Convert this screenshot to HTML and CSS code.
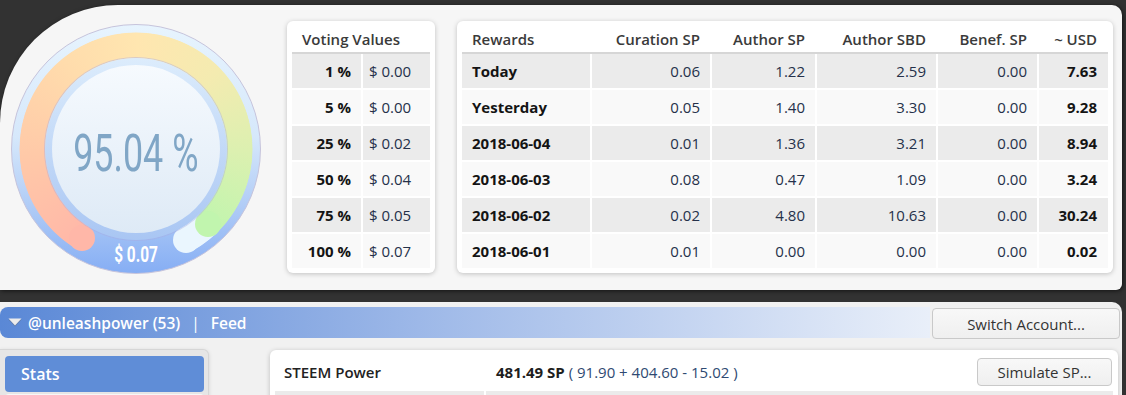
FILE: index.html
```html
<!DOCTYPE html>
<html lang="en">
<head>
<meta charset="UTF-8" />
<meta name="viewport" content="width=device-width, initial-scale=1" />
<title>Steem Account</title>
<link rel="stylesheet" href="styles.css">
</head>
<body>
  <section class="summary">
    <div class="gauge" role="img" aria-label="Voting power 95.04 %">
      <div class="gauge-arc"></div>
      <span class="cap cap-track"></span>
      <span class="cap cap-start"></span>
      <span class="cap cap-end"></span>
      <div class="gauge-face">
        <div class="gauge-disc"><span class="gauge-pct">95.04 %</span></div>
      </div>
      <span class="gauge-usd">$ 0.07</span>
    </div>

    <div class="card vote-card">
      <table class="grid vote-table">
        <colgroup><col class="c-pct"><col class="c-val"></colgroup>
        <thead>
          <tr><th colspan="2">Voting Values</th></tr>
        </thead>
        <tbody>
          <tr><td class="strong num">1 %</td><td class="val">$ 0.00</td></tr>
          <tr><td class="strong num">5 %</td><td class="val">$ 0.00</td></tr>
          <tr><td class="strong num">25 %</td><td class="val">$ 0.02</td></tr>
          <tr><td class="strong num">50 %</td><td class="val">$ 0.04</td></tr>
          <tr><td class="strong num">75 %</td><td class="val">$ 0.05</td></tr>
          <tr><td class="strong num">100 %</td><td class="val">$ 0.07</td></tr>
        </tbody>
      </table>
    </div>

    <div class="card rewards-card">
      <table class="grid rewards-table">
        <colgroup>
          <col class="c-day"><col class="c-cur"><col class="c-asp"><col class="c-sbd"><col class="c-ben"><col class="c-usd">
        </colgroup>
        <thead>
          <tr>
            <th>Rewards</th>
            <th class="num">Curation SP</th>
            <th class="num">Author SP</th>
            <th class="num">Author SBD</th>
            <th class="num">Benef. SP</th>
            <th class="num">~ USD</th>
          </tr>
        </thead>
        <tbody>
          <tr><td class="strong">Today</td><td class="num">0.06</td><td class="num">1.22</td><td class="num">2.59</td><td class="num">0.00</td><td class="num strong">7.63</td></tr>
          <tr><td class="strong">Yesterday</td><td class="num">0.05</td><td class="num">1.40</td><td class="num">3.30</td><td class="num">0.00</td><td class="num strong">9.28</td></tr>
          <tr><td class="strong">2018-06-04</td><td class="num">0.01</td><td class="num">1.36</td><td class="num">3.21</td><td class="num">0.00</td><td class="num strong">8.94</td></tr>
          <tr><td class="strong">2018-06-03</td><td class="num">0.08</td><td class="num">0.47</td><td class="num">1.09</td><td class="num">0.00</td><td class="num strong">3.24</td></tr>
          <tr><td class="strong">2018-06-02</td><td class="num">0.02</td><td class="num">4.80</td><td class="num">10.63</td><td class="num">0.00</td><td class="num strong">30.24</td></tr>
          <tr><td class="strong">2018-06-01</td><td class="num">0.01</td><td class="num">0.00</td><td class="num">0.00</td><td class="num">0.00</td><td class="num strong">0.02</td></tr>
        </tbody>
      </table>
    </div>
  </section>

  <section class="account">
    <div class="account-bar">
      <div class="account-title">
        <svg class="caret" width="14" height="9" viewBox="0 0 14 9" aria-hidden="true">
          <polygon points="0.5,1.5 13.5,1.5 7,8.5" fill="#5d6b80" opacity="0.55"/>
          <polygon points="0.5,0.5 13.5,0.5 7,7.5" fill="#ececec"/>
        </svg>
        <span>@unleashpower (53)</span>
        <span class="sep">|</span>
        <span>Feed</span>
      </div>
      <button type="button" class="btn switch-btn">Switch Account...</button>
    </div>

    <div class="account-body">
      <nav class="side-nav">
        <a class="nav-item active" href="#">Stats</a>
        <a class="nav-item" href="#" aria-label="More"></a>
      </nav>

      <div class="card stats-card">
        <table class="grid stats-table">
          <colgroup><col class="c-label"><col></colgroup>
          <tbody>
            <tr>
              <td class="label">STEEM Power</td>
              <td>
                <div class="sp-cell">
                  <span><b>481.49 SP</b> <span class="sp-parts">( 91.90 + 404.60 - 15.02 )</span></span>
                  <button type="button" class="btn sim-btn">Simulate SP...</button>
                </div>
              </td>
            </tr>
            <tr class="alt">
              <td class="label">&nbsp;</td>
              <td><span class="mini-btn"></span></td>
            </tr>
          </tbody>
        </table>
      </div>
    </div>
  </section>
</body>
</html>
```

FILE: styles.css
```css
html, body {
  height: 395px;
  overflow: hidden;
}

body {
  margin: 0;
  background: #323232;
  font-family: "Open Sans", "Liberation Sans", sans-serif;
  font-size: 15px;
  color: #333;
}

/* top summary panel */
.summary {
  display: flex;
  align-items: flex-start;
  box-sizing: border-box;
  width: 1122px;
  height: 285px;
  margin-top: 5px;
  padding: 16px 0 0 11px;
  background: #f6f6f6;
  border-radius: 118px 10px 6px 0;
  box-shadow: 1px 1px 4px rgba(0,0,0,0.6);
}

/* voting power gauge */
.gauge {
  position: relative;
  flex: none;
  box-sizing: border-box;
  width: 250px;
  height: 250px;
  margin-top: 3px;
  border: 1px solid #c6c4dc;
  border-radius: 50%;
  background: linear-gradient(#e7f4fe 0%, #d6e8fb 45%, #b2cdf6 72%, #86aef4 100%);
}

.gauge-arc {
  position: absolute;
  left: 7px;
  top: 7px;
  width: 234px;
  height: 234px;
  border-radius: 50%;
  background: conic-gradient(from 211deg,
    #ffb7a8 0deg, #ffc9a8 55deg, #ffdcac 110deg, #ffe6b0 150deg,
    #f4ebb0 195deg, #dcf0b0 240deg, #c1f5ae 285deg,
    #eaf6fe 285deg, #eaf6fe 300deg, transparent 300deg);
  -webkit-mask: radial-gradient(circle, transparent 90px, #000 91px, #000 116px, transparent 117px);
  mask: radial-gradient(circle, transparent 90px, #000 91px, #000 116px, transparent 117px);
}

.cap {
  position: absolute;
  width: 26px;
  height: 26px;
  border-radius: 50%;
}

.cap-start {
  left: 57px;
  top: 200px;
  background: #ffb7a8;
}

.cap-track {
  left: 161px;
  top: 202px;
  background: #eaf6fe;
}

.cap-end {
  left: 183px;
  top: 186px;
  background: #c1f5ae;
}

.gauge-face {
  position: absolute;
  left: 33px;
  top: 33px;
  box-sizing: border-box;
  width: 182px;
  height: 182px;
  padding: 7px;
  border-radius: 50%;
  background: linear-gradient(#dcecfc, #a9c6f3);
  box-shadow: 0 0 0 1px rgba(170,170,225,0.45);
}

.gauge-disc {
  display: flex;
  justify-content: center;
  align-items: center;
  width: 100%;
  height: 100%;
  border-radius: 50%;
  background: linear-gradient(#f6fafe, #deeaf6);
}

.gauge-pct {
  display: inline-block;
  padding-top: 9px;
  font-family: Roboto, "Liberation Sans", sans-serif;
  font-size: 52px;
  line-height: 1;
  color: #80a6c6;
  white-space: nowrap;
  transform: scaleX(0.69);
}

.gauge-usd {
  position: absolute;
  left: 50%;
  top: 219px;
  font-family: Roboto, "Liberation Sans", sans-serif;
  font-size: 22px;
  font-weight: 700;
  line-height: 22px;
  color: #fff;
  white-space: nowrap;
  transform: translateX(-50%) scaleX(0.7);
}

/* cards and tables */
.card {
  background: #fff;
  border-radius: 6px;
  box-shadow: 0 1px 5px rgba(0,0,0,0.22);
  padding: 5px;
}

.vote-card {
  margin-left: 26px;
}

.rewards-card {
  margin-left: 22px;
}

.grid {
  border-collapse: collapse;
  border-style: hidden;
  table-layout: fixed;
}

.grid th,
.grid td {
  border: 2px solid #fff;
  padding: 0 10px;
  white-space: nowrap;
}

.grid th {
  line-height: 26px;
  font-weight: 600;
  color: #3a3a3a;
  text-align: left;
  background: #fff;
  border-bottom-color: #d6d6d6;
}

.grid td {
  line-height: 34px;
  color: #25314a;
  background: #f9f9f9;
}

.grid tbody tr:nth-child(odd) td {
  background: #ebebeb;
}

.grid .num {
  text-align: right;
}

.grid .strong {
  font-weight: 700;
  color: #141414;
}

.vote-table {
  width: 138px;
}

.vote-table .c-pct { width: 70px; }
.vote-table .c-val { width: 68px; }

.vote-table .val {
  padding-left: 6px;
}

.rewards-table {
  width: 646px;
}

.rewards-table .c-day { width: 129px; }
.rewards-table .c-cur { width: 120px; }
.rewards-table .c-asp { width: 105px; }
.rewards-table .c-sbd { width: 121px; }
.rewards-table .c-ben { width: 101px; }
.rewards-table .c-usd { width: 70px; }

.rewards-table th:last-child,
.rewards-table td:last-child {
  padding-right: 11px;
}

/* account section */
.account {
  box-sizing: border-box;
  width: 1122px;
  height: 200px;
  margin-top: 12px;
  padding-top: 5px;
  background: #f1f1f1;
  border-radius: 0 10px 0 0;
}

.account-bar {
  display: flex;
  gap: 2px;
  padding-right: 2px;
}

.account-title {
  flex: 1;
  display: flex;
  align-items: center;
  height: 31px;
  padding-left: 8px;
  border-radius: 8px 0 0 8px;
  background: linear-gradient(to right, #5a88d6, #9db8e8 45%, #e9eff9);
  color: #fff;
  font-weight: 600;
  font-size: 15.5px;
}

.caret {
  margin: 0 6px 0 0;
}

.sep {
  margin: 0 11px;
  font-weight: 400;
}

.btn {
  font-family: "Open Sans", "Liberation Sans", sans-serif;
  font-size: 15px;
  color: #333;
  background: linear-gradient(#f8f8f8, #efefef);
  border: 1px solid #c9c9c9;
  border-radius: 4px;
  cursor: pointer;
}

.switch-btn {
  width: 188px;
  height: 31px;
  margin-top: 1px;
}

.account-body {
  display: flex;
  align-items: flex-start;
  gap: 61px;
  padding-top: 10px;
}

.side-nav {
  display: flex;
  flex-direction: column;
  gap: 2px;
  box-sizing: border-box;
  width: 209px;
  padding: 6px 4px 4px 5px;
  background: #e6e6e6;
  border: 1px solid #d6d6d6;
  border-left: none;
  border-radius: 0 6px 0 0;
  box-shadow: 0 1px 4px rgba(0,0,0,0.12);
}

.nav-item {
  display: block;
  height: 36px;
  line-height: 36px;
  padding-left: 16px;
  border-radius: 4px;
  background: #f7f7f7;
  color: #333;
  font-weight: 600;
  font-size: 16px;
  text-decoration: none;
}

.nav-item.active {
  background: #5f8dd7;
  color: #fff;
}

.stats-card {
  flex: 1;
  margin: 1px 4px 0 0;
}

.stats-table {
  width: 100%;
}

.stats-table .c-label { width: 210px; }

.stats-table td,
.stats-table tbody tr:nth-child(odd) td {
  background: #fff;
}

.stats-table tr.alt td {
  background: #ebebeb;
}

.stats-table .label {
  padding-left: 9px;
  font-weight: 600;
  color: #222;
}

.sp-cell {
  display: flex;
  justify-content: space-between;
  align-items: center;
}

.sp-cell b {
  color: #1e1e1e;
}

.sp-parts {
  color: #2f4a72;
}

.sim-btn {
  width: 135px;
  height: 28px;
  margin-right: -9px;
}

.mini-btn {
  display: inline-block;
  width: 48px;
  height: 24px;
  margin-left: 205px;
  vertical-align: middle;
  background: #f4f4f4;
  border: 1px solid #ccc;
  border-radius: 4px;
}
```
